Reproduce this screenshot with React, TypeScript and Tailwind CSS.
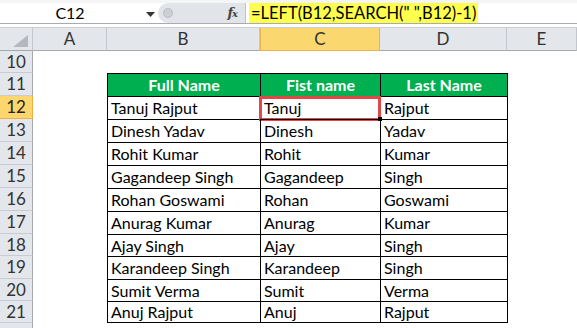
import React from 'react';

const people = [
  ['Tanuj Rajput', 'Tanuj', 'Rajput'],
  ['Dinesh Yadav', 'Dinesh', 'Yadav'],
  ['Rohit Kumar', 'Rohit', 'Kumar'],
  ['Gagandeep Singh', 'Gagandeep', 'Singh'],
  ['Rohan Goswami', 'Rohan', 'Goswami'],
  ['Anurag Kumar', 'Anurag', 'Kumar'],
  ['Ajay Singh', 'Ajay', 'Singh'],
  ['Karandeep Singh', 'Karandeep', 'Singh'],
  ['Sumit Verma', 'Sumit', 'Verma'],
  ['Anuj Rajput', 'Anuj', 'Rajput'],
];

// row heights in px, rows 12..21
const tall = [true, true, true, true, true, true, false, true, false, false];

function RowHeader({ n, active }: { n?: number; active?: boolean }) {
  return (
    <div
      className={
        active
          ? 'w-[33px] shrink-0 flex items-center justify-center bg-[#fdd76d] border-r border-b border-[#f0b040] text-[#222]'
          : 'w-[33px] shrink-0 flex items-center justify-center bg-[#e3e6ea] border-r border-b border-r-[#a4a9b0] border-b-[#c8ccd2] text-[#333]'
      }
    >
      {n}
    </div>
  );
}

function ColHeader({ label, w, active }: { label: string; w: string; active?: boolean }) {
  return (
    <div
      className={
        (active
          ? 'bg-[#fbd86f] border-x border-b border-[#eeb24a] text-[#333] '
          : 'bg-[#e3e6ea] border-r border-b border-r-[#c3c7cd] border-b-[#a4a9b0] text-[#333] ') +
        w +
        ' shrink-0 flex items-center justify-center'
      }
    >
      {label}
    </div>
  );
}

export default function App() {
  return (
    <div className="w-[577px] h-[328px] overflow-hidden bg-white font-[family-name:Lato,sans-serif] text-[16px] text-black">
      {/* formula bar */}
      <div className="h-[24px] flex border-t-[3px] border-t-[#f4f5f7] border-b border-b-[#a8acb2] bg-white">
        <div className="w-[158px] shrink-0 flex items-center relative">
          <span className="w-[140px] text-center text-[16px]">C12</span>
          <svg width="9" height="5" viewBox="0 0 9 5" className="absolute left-[146px] top-[9px]">
            <path d="M0 0H9L4.5 5Z" fill="#333" />
          </svg>
        </div>
        <div className="w-[88px] shrink-0 flex items-center bg-[#e1e4e8] rounded-l-[11px] border-r border-[#bfc3c8] pl-[5px]">
          <div className="w-[10px] h-[10px] rounded-full bg-[#cdd0d4] border border-[#b8bcc1]" />
          <span className="ml-auto mr-[8px] font-[family-name:'DejaVu_Serif',serif] italic font-bold text-[13px] text-[#444] tracking-[-1px]">
            f<span className="text-[10px]">x</span>
          </span>
        </div>
        <div className="flex-1 flex items-center pl-[3px]">
          <span className="bg-[#ffff4d] h-[20px] px-[2px] flex items-center text-[16.5px]">
            =LEFT(B12,SEARCH(" ",B12)-1)
          </span>
        </div>
      </div>
      <div className="h-[4px] bg-white border-b border-[#c9ccd1]" />

      {/* column headers */}
      <div className="h-[23px] flex text-[17px]">
        <div className="w-[33px] shrink-0 bg-[#e3e6ea] border-r border-b border-r-[#c3c7cd] border-b-[#a4a9b0] relative">
          <svg width="15" height="12" viewBox="0 0 15 12" className="absolute right-[4px] bottom-[3px]">
            <path d="M15 0V12H0Z" fill="#b4b8be" />
          </svg>
        </div>
        <ColHeader label="A" w="w-[74px]" />
        <ColHeader label="B" w="w-[153px]" />
        <ColHeader label="C" w="w-[120px]" active />
        <ColHeader label="D" w="w-[127px]" />
        <ColHeader label="E" w="flex-1" />
      </div>

      {/* row 10 */}
      <div className="h-[22px] flex text-[17px]">
        <RowHeader n={10} />
        <div className="flex-1" />
      </div>

      {/* row 11 - table header */}
      <div className="h-[23px] flex">
        <div className="text-[17px] flex">
          <RowHeader n={11} />
        </div>
        <div className="w-[74px] shrink-0" />
        <div className="w-[153px] shrink-0 bg-[#00b050] border-l border-t border-black flex items-center justify-center text-white font-bold">
          Full Name
        </div>
        <div className="w-[120px] shrink-0 bg-[#00b050] border-l border-t border-black flex items-center justify-center text-white font-bold">
          Fist name
        </div>
        <div className="w-[128px] shrink-0 bg-[#00b050] border-x border-t border-black flex items-center justify-center text-white font-bold">
          Last Name
        </div>
        <div className="flex-1" />
      </div>

      {/* data rows */}
      {people.map((p, i) => {
        const last = i === people.length - 1;
        return (
          <div key={i} className={(tall[i] ? 'h-[23px]' : 'h-[22px]') + ' flex'}>
            <div className="text-[17px] flex">
              <RowHeader n={12 + i} active={i === 0} />
            </div>
            <div className="w-[74px] shrink-0" />
            <div className={'w-[153px] shrink-0 border-l border-t border-black flex items-center pl-[3px]' + (last ? ' border-b' : '')}>
              {p[0]}
            </div>
            <div className={'w-[120px] shrink-0 border-l border-t border-black flex items-center pl-[3px] relative' + (last ? ' border-b' : '')}>
              {p[1]}
              {i === 0 && (
                <>
                  <div className="absolute -left-[2px] -top-[1px] w-[122px] h-[25px] border-[3px] border-[#e04848]" />
                  <div className="absolute -right-[2px] -bottom-[2px] w-[4px] h-[4px] bg-black" />
                </>
              )}
            </div>
            <div className={'w-[128px] shrink-0 border-x border-t border-black flex items-center pl-[3px]' + (last ? ' border-b' : '')}>
              {p[2]}
            </div>
            <div className="flex-1" />
          </div>
        );
      })}

      {/* row 22, cut off at the bottom edge */}
      <div className="h-[10px] flex">
        <RowHeader />
      </div>
    </div>
  );
}
